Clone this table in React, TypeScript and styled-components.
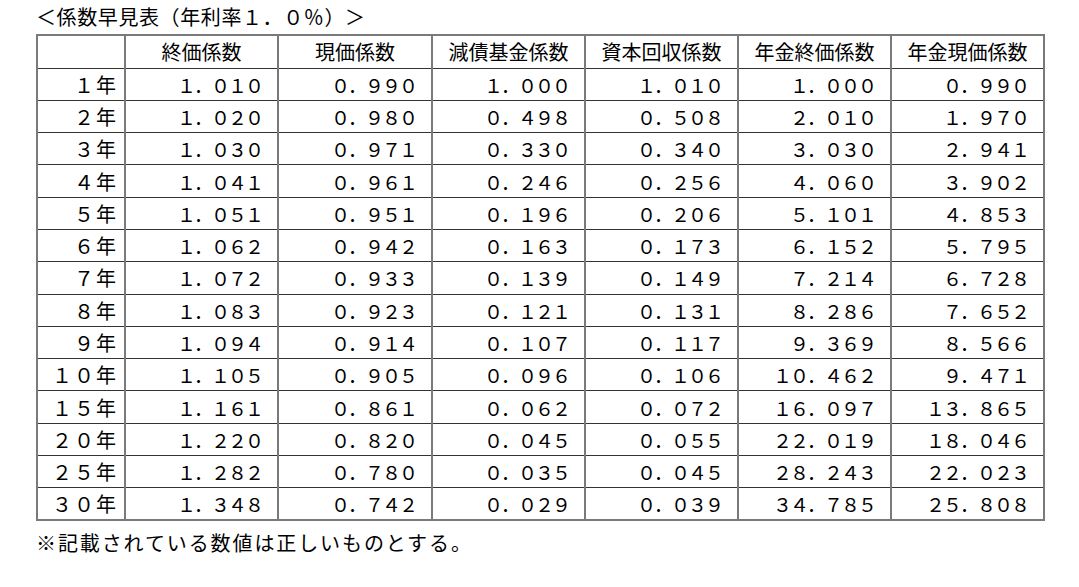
import styled, { createGlobalStyle } from "styled-components";

const GlobalStyle = createGlobalStyle`
  html, body {
    margin: 0;
    padding: 0;
    background: #ffffff;
  }
  body {
    font-family: "Noto Sans CJK JP", "Noto Sans", sans-serif;
    color: #000;
  }
`;

const Page = styled.div`
  padding-left: 36px;
  width: 1007px;
`;

const Title = styled.div`
  height: 34px;
  line-height: 34px;
  font-size: 20px;
  letter-spacing: 0.6px;
  white-space: nowrap;
`;

const Table = styled.table`
  border-collapse: collapse;
  table-layout: fixed;
  width: 1007px;
  border: 2px solid #7a7a7a;
`;

const Col = styled.col<{ w: number }>`
  width: ${(p) => p.w}px;
`;

const HeadRow = styled.tr`
  height: 33px;
`;

const Row = styled.tr`
  height: 32.3px;
`;

const HeadCell = styled.th`
  font-weight: normal;
  font-size: 20px;
  text-align: center;
  padding: 0;
  border-left: 2px solid #7a7a7a;
  border-bottom: 1px solid #333;
  white-space: nowrap;
`;

const LabelCell = styled.td`
  font-size: 20px;
  letter-spacing: 2px;
  text-align: right;
  padding: 0 6px 0 0;
  border-bottom: 1px solid #333;
  white-space: nowrap;
`;

const NumCell = styled.td`
  font-size: 19px;
  letter-spacing: -2px;
  text-align: right;
  padding: 0 15px 0 0;
  border-left: 2px solid #7a7a7a;
  border-bottom: 1px solid #333;
  white-space: nowrap;
`;

const Note = styled.div`
  height: 44px;
  line-height: 44px;
  font-size: 20px;
  letter-spacing: 1.9px;
  white-space: nowrap;
`;

const headers = [
  "",
  "終価係数",
  "現価係数",
  "減債基金係数",
  "資本回収係数",
  "年金終価係数",
  "年金現価係数",
];

const widths = [88, 153, 154, 153, 153, 153, 153];

const rows: [string, string[]][] = [
  ["1", ["1.010", "0.990", "1.000", "1.010", "1.000", "0.990"]],
  ["2", ["1.020", "0.980", "0.498", "0.508", "2.010", "1.970"]],
  ["3", ["1.030", "0.971", "0.330", "0.340", "3.030", "2.941"]],
  ["4", ["1.041", "0.961", "0.246", "0.256", "4.060", "3.902"]],
  ["5", ["1.051", "0.951", "0.196", "0.206", "5.101", "4.853"]],
  ["6", ["1.062", "0.942", "0.163", "0.173", "6.152", "5.795"]],
  ["7", ["1.072", "0.933", "0.139", "0.149", "7.214", "6.728"]],
  ["8", ["1.083", "0.923", "0.121", "0.131", "8.286", "7.652"]],
  ["9", ["1.094", "0.914", "0.107", "0.117", "9.369", "8.566"]],
  ["10", ["1.105", "0.905", "0.096", "0.106", "10.462", "9.471"]],
  ["15", ["1.161", "0.861", "0.062", "0.072", "16.097", "13.865"]],
  ["20", ["1.220", "0.820", "0.045", "0.055", "22.019", "18.046"]],
  ["25", ["1.282", "0.780", "0.035", "0.045", "28.243", "22.023"]],
  ["30", ["1.348", "0.742", "0.029", "0.039", "34.785", "25.808"]],
];

// ascii digits/period -> full-width, as in the original document
const wide = (s: string) =>
  s.replace(/[0-9.]/g, (c) => String.fromCharCode(c.charCodeAt(0) + 0xfee0));

export default function App() {
  return (
    <>
      <GlobalStyle />
      <Page>
        <Title>＜係数早見表（年利率１．０％）＞</Title>
        <Table>
          <colgroup>
            {widths.map((w, i) => (
              <Col key={i} w={w} />
            ))}
          </colgroup>
          <thead>
            <HeadRow>
              {headers.map((h, i) => (
                <HeadCell key={i}>{h}</HeadCell>
              ))}
            </HeadRow>
          </thead>
          <tbody>
            {rows.map(([year, vals]) => (
              <Row key={year}>
                <LabelCell>{wide(year)}年</LabelCell>
                {vals.map((v, i) => (
                  <NumCell key={i}>{wide(v)}</NumCell>
                ))}
              </Row>
            ))}
          </tbody>
        </Table>
        <Note>※記載されている数値は正しいものとする。</Note>
      </Page>
    </>
  );
}
